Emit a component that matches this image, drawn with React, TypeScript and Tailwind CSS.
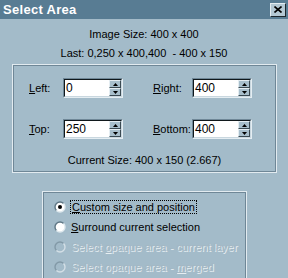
import React from "react";

function Spin({ value }: { value: string }) {
  return (
    <div className="flex h-[20px] w-[60px] border border-t-[#6f8797] border-l-[#6f8797] border-b-[#e4edf2] border-r-[#e4edf2]">
      <div className="flex flex-1 border border-t-[#10181c] border-l-[#10181c] border-b-[#c9d7df] border-r-[#c9d7df] bg-white">
        <span className="flex-1 pl-[1px] text-[12px] leading-[16px] text-black">{value}</span>
        <div className="flex w-[12px] flex-col">
          {[0, 1].map((i) => (
            <div
              key={i}
              className="flex flex-1 items-center justify-center border border-t-[#e4edf2] border-l-[#e4edf2] border-b-[#3b4a52] border-r-[#3b4a52] bg-[#a8bfcc]"
            >
              <svg width="5" height="3" viewBox="0 0 5 3">
                {i === 0 ? <path d="M2.5 0L5 3H0z" fill="#000" /> : <path d="M0 0H5L2.5 3z" fill="#000" />}
              </svg>
            </div>
          ))}
        </div>
      </div>
    </div>
  );
}

function Radio({ checked, disabled }: { checked?: boolean; disabled?: boolean }) {
  return (
    <svg width="12" height="12" viewBox="0 0 12 12" className="shrink-0">
      {!disabled && <circle cx="6" cy="6" r="5" fill="#fff" />}
      <path
        d="M2.46 9.54A5 5 0 0 1 9.54 2.46"
        stroke={disabled ? "#8299a7" : "#5f7785"}
        strokeWidth="1.4"
        fill="none"
      />
      <path
        d="M9.54 2.46A5 5 0 0 1 2.46 9.54"
        stroke={disabled ? "#d3dfe6" : "#dfe9ee"}
        strokeWidth="1.4"
        fill="none"
      />
      {checked && <circle cx="6" cy="6" r="2" fill="#000" />}
    </svg>
  );
}

export default function App() {
  const font = { fontFamily: '"Liberation Sans", Arial, sans-serif' };
  return (
    <div className="relative h-[278px] w-[288px] overflow-hidden whitespace-nowrap bg-[#a3bbc9] text-[11px] text-black" style={font}>
      {/* Title bar */}
      <div className="flex h-[19px] items-center justify-between bg-[#587c93] pl-[3px] pr-[2px]">
        <span className="text-[13px] font-bold tracking-[0.3px] text-white">Select Area</span>
        <div className="flex h-[14px] w-[16px] items-center justify-center border border-t-[#e4edf2] border-l-[#e4edf2] border-b-[#1c262c] border-r-[#1c262c] bg-[#b4c8d4]">
          <svg width="8" height="7" viewBox="0 0 8 7">
            <path d="M0.5 0.5L7.5 6.5M7.5 0.5L0.5 6.5" stroke="#000" strokeWidth="1.6" />
          </svg>
        </div>
      </div>

      <div className="flex flex-col items-center pt-[6px]">
        <div className="leading-[19px]">Image Size: 400 x 400</div>
        <div className="leading-[19px]">Last: 0,250 x 400,400&nbsp; - 400 x 150</div>
      </div>

      {/* Coordinates group */}
      <div className="ml-[12px] mt-[1px] w-[265px] border border-[#e2ebf0]">
        <div className="flex h-[107px] flex-col border border-[#6f8797] pl-[15px] pt-[12px]">
          <div className="flex flex-col gap-[21px]">
            {[
              ["L", "eft:", "0", "R", "ight:", "400"],
              ["T", "op:", "250", "B", "ottom:", "400"],
            ].map(([a, b, v1, c, d, v2]) => (
              <div key={a} className="flex items-center">
                <span className="w-[34px]">
                  <u>{a}</u>
                  {b}
                </span>
                <Spin value={v1} />
                <span className="ml-[30px] w-[39px]">
                  <u>{c}</u>
                  {d}
                </span>
                <Spin value={v2} />
              </div>
            ))}
          </div>
          <div className="mt-[13px] pr-[15px] text-center">Current Size: 400 x 150 (2.667)</div>
        </div>
      </div>

      {/* Mode group */}
      <div className="ml-[42px] mt-[18px] w-[205px] border border-[#e2ebf0]">
        <div className="flex h-[100px] flex-col gap-[6px] border border-[#6f8797] pl-[10px] pt-[7px]">
          <div className="flex items-center gap-[4px]">
            <Radio checked />
            <span className="border border-dotted border-black px-[1px] leading-[12px]">
              <u>C</u>ustom size and position
            </span>
          </div>
          <div className="flex items-center gap-[5px]">
            <Radio />
            <span className="leading-[14px]">
              <u>S</u>urround current selection
            </span>
          </div>
          <div className="flex items-center gap-[5px] text-[#a3b7c3] [text-shadow:1px_1px_0_#e6eef2]">
            <Radio disabled />
            <span className="leading-[14px]">
              Select <u>o</u>paque area - current layer
            </span>
          </div>
          <div className="flex items-center gap-[5px] text-[#a3b7c3] [text-shadow:1px_1px_0_#e6eef2]">
            <Radio disabled />
            <span className="leading-[14px]">
              Select opaque area - <u>m</u>erged
            </span>
          </div>
        </div>
      </div>
    </div>
  );
}
